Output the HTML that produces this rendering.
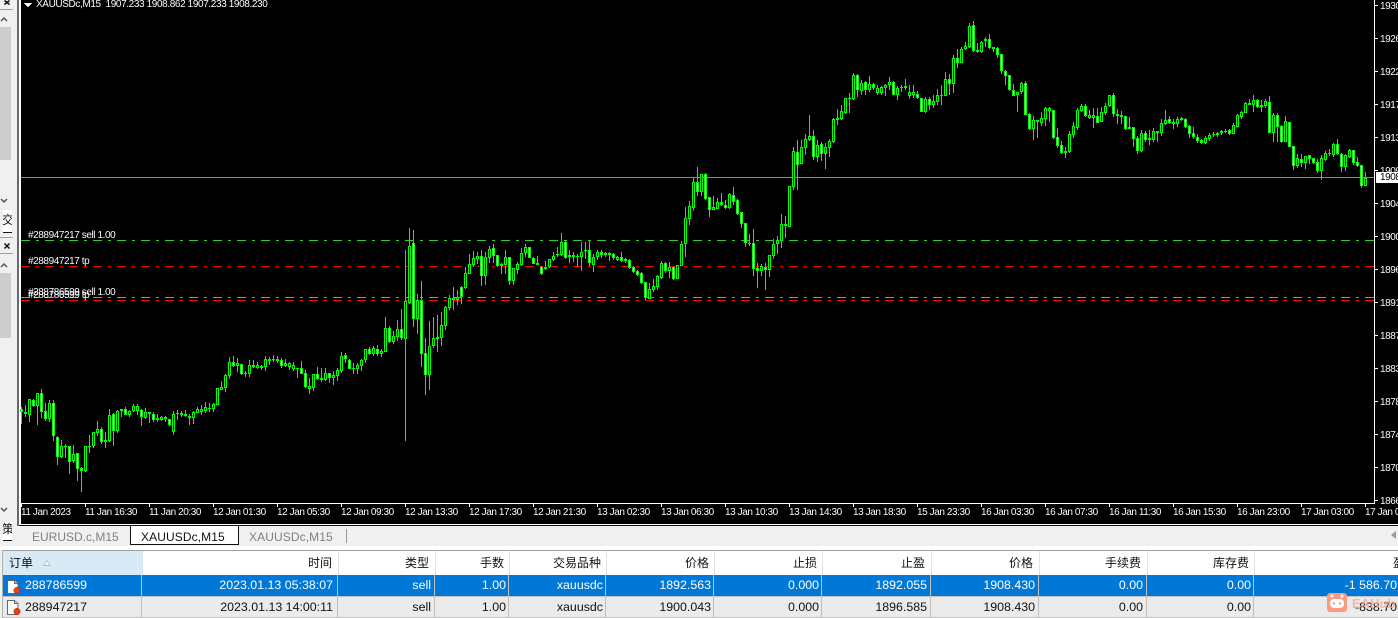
<!DOCTYPE html>
<html><head><meta charset="utf-8"><style>
html,body{margin:0;padding:0;background:#f0f0f0}
#p{position:relative;width:1398px;height:618px;overflow:hidden;font-family:"Liberation Sans","Noto Sans CJK SC",sans-serif;background:#f0f0f0}
#p div,#p span,#p svg{position:absolute}
.c{font-size:10px;letter-spacing:-.42px;color:#f8fbff;white-space:pre;line-height:12px}
.t{font-size:12.4px;white-space:nowrap;line-height:16px}
.h{color:#111;top:555px;font-size:12px}
.a{color:#fff;top:577px}
.b{color:#111;top:599px}
.tab{font-size:12px;color:#808080;top:529px;line-height:16px}
</style></head><body><div id="p">
<div style="left:0;top:0;width:17px;height:526px;background:#f0f0f0"></div>
<div style="left:0;top:27px;width:11px;height:133px;background:#cdcdcd"></div>
<div style="left:0;top:273px;width:11px;height:65px;background:#cdcdcd"></div>
<div style="left:0;top:9px;width:13px;height:1px;background:#a0a0a0"></div>
<div style="left:0;top:253px;width:13px;height:1px;background:#a0a0a0"></div>
<div style="left:0;top:237px;width:13px;height:1px;background:#a0a0a0"></div>
<svg style="left:0;top:0" width="17" height="526" fill="none" stroke="#555" stroke-width="1.5">
<path d="M4.5 .5l5 4M9.5 .5l-5 4M4.5 243.5l5 5M9.5 243.5l-5 5" stroke="#111"/>
<path d="M1 21l3-3 3 3M1 267l3-3 3 3M1 199l3 3 3-3M1 508l3 3 3-3"/>
</svg>
<div style="left:3px;top:210px;width:9px;height:22px;background:#fff;border-bottom:1px solid #111;overflow:hidden"><span style="left:-1px;top:3px;font-size:12px;line-height:14px;color:#111">交</span></div>
<div style="left:17px;top:0;width:2px;height:526px;background:#696969"></div>
<div style="left:19px;top:0;width:2px;height:526px;background:#fff"></div>

<div id="chart" style="left:21px;top:0;width:1377px;height:524px;background:#000"></div>
<div style="left:19px;top:524px;width:1379px;height:1px;background:#fff"></div>
<div style="left:19px;top:525px;width:1379px;height:1px;background:#111"></div>

<svg id="s" style="left:0;top:0" width="1398" height="524" shape-rendering="crispEdges">
<line x1="21" x2="1374" y1="177.5" y2="177.5" stroke="#8a8a8a"/>
<g stroke-dasharray="9 6 3 6" fill="none">
<line x1="21" x2="1374" y1="240.5" y2="240.5" stroke="#32cd32"/>
<line x1="21" x2="1374" y1="297.5" y2="297.5" stroke="#32cd32"/>
<line x1="21" x2="1374" y1="266.5" y2="266.5" stroke="#ff0000"/>
<line x1="21" x2="1374" y1="300.5" y2="300.5" stroke="#ff0000"/>
</g>
<path id="wk" stroke="none" fill="#00ff00"/>
<path id="bd" stroke="none" fill="#00ff00"/>
<path id="wh" stroke="none" fill="#fff"/>
<path id="bk" stroke="none" fill="#000"/>
<rect x="1374" y="0" width="1" height="504" fill="#fff"/>
<rect x="21" y="503" width="1354" height="1" fill="#fff"/>
<path fill="#fff" d="M1375 5h3v1h-3zM1375 38h3v1h-3zM1375 71h3v1h-3zM1375 104h3v1h-3zM1375 137h3v1h-3zM1375 170h3v1h-3zM1375 203h3v1h-3zM1375 236h3v1h-3zM1375 269h3v1h-3zM1375 302h3v1h-3zM1375 335h3v1h-3zM1375 368h3v1h-3zM1375 401h3v1h-3zM1375 434h3v1h-3zM1375 467h3v1h-3zM1375 500h3v1h-3z"/>
<path fill="#fff" d="M21 504h1v3h-1zM85 504h1v3h-1zM149 504h1v3h-1zM213 504h1v3h-1zM277 504h1v3h-1zM341 504h1v3h-1zM405 504h1v3h-1zM469 504h1v3h-1zM533 504h1v3h-1zM597 504h1v3h-1zM661 504h1v3h-1zM725 504h1v3h-1zM789 504h1v3h-1zM853 504h1v3h-1zM917 504h1v3h-1zM981 504h1v3h-1zM1045 504h1v3h-1zM1109 504h1v3h-1zM1173 504h1v3h-1zM1237 504h1v3h-1zM1301 504h1v3h-1zM1365 504h1v3h-1z"/>
<path fill="#fff" d="M24 3h8l-4 4.500z"/>
</svg>

<div class="c" style="left:36px;top:-1px;letter-spacing:-.38px">XAUUSDc,M15  1907.233 1908.862 1907.233 1908.230</div>
<div class="c" style="left:28px;top:230px">#288947217 sell 1.00</div>
<div class="c" style="left:28px;top:256px">#288947217 tp</div>
<div class="c" style="left:28px;top:287px">#288786599 sell 1.00</div>
<div class="c" style="left:28px;top:290px">#288786599 tp</div>

<div class="c" style="left:1380px;top:1px">1930</div>
<div class="c" style="left:1380px;top:34px">1926</div>
<div class="c" style="left:1380px;top:67px">1922</div>
<div class="c" style="left:1380px;top:100px">1917</div>
<div class="c" style="left:1380px;top:133px">1913</div>
<div class="c" style="left:1380px;top:166px">1909</div>
<div class="c" style="left:1380px;top:199px">1904</div>
<div class="c" style="left:1380px;top:232px">1900</div>
<div class="c" style="left:1380px;top:265px">1896</div>
<div class="c" style="left:1380px;top:298px">1891</div>
<div class="c" style="left:1380px;top:331px">1887</div>
<div class="c" style="left:1380px;top:364px">1883</div>
<div class="c" style="left:1380px;top:397px">1878</div>
<div class="c" style="left:1380px;top:430px">1874</div>
<div class="c" style="left:1380px;top:463px">1870</div>
<div class="c" style="left:1380px;top:496px">1866</div>
<div style="left:1376px;top:172px;width:22px;height:11px;background:#fff"></div>
<div class="c" style="left:1380px;top:172px;color:#000">1908</div>

<div class="c" style="left:21px;top:507px">11 Jan 2023</div>
<div class="c" style="left:85px;top:507px">11 Jan 16:30</div>
<div class="c" style="left:149px;top:507px">11 Jan 20:30</div>
<div class="c" style="left:213px;top:507px">12 Jan 01:30</div>
<div class="c" style="left:277px;top:507px">12 Jan 05:30</div>
<div class="c" style="left:341px;top:507px">12 Jan 09:30</div>
<div class="c" style="left:405px;top:507px">12 Jan 13:30</div>
<div class="c" style="left:469px;top:507px">12 Jan 17:30</div>
<div class="c" style="left:533px;top:507px">12 Jan 21:30</div>
<div class="c" style="left:597px;top:507px">13 Jan 02:30</div>
<div class="c" style="left:661px;top:507px">13 Jan 06:30</div>
<div class="c" style="left:725px;top:507px">13 Jan 10:30</div>
<div class="c" style="left:789px;top:507px">13 Jan 14:30</div>
<div class="c" style="left:853px;top:507px">13 Jan 18:30</div>
<div class="c" style="left:917px;top:507px">15 Jan 23:30</div>
<div class="c" style="left:981px;top:507px">16 Jan 03:30</div>
<div class="c" style="left:1045px;top:507px">16 Jan 07:30</div>
<div class="c" style="left:1109px;top:507px">16 Jan 11:30</div>
<div class="c" style="left:1173px;top:507px">16 Jan 15:30</div>
<div class="c" style="left:1237px;top:507px">16 Jan 23:00</div>
<div class="c" style="left:1301px;top:507px">17 Jan 03:00</div>
<div class="c" style="left:1365px;top:507px">17 Jan 0</div>

<div style="left:0;top:526px;width:1398px;height:20px;background:#f0f0f0"></div>
<div style="left:0;top:546px;width:1398px;height:4px;background:#fff"></div>
<div style="left:3px;top:522px;width:9px;height:18px;background:#fff;border-bottom:1px solid #111;overflow:hidden"><span style="left:-1px;top:0;font-size:12px;line-height:14px;color:#111">策</span></div>
<div style="left:130px;top:526px;width:107px;height:18px;background:#fff;border-left:1px solid #111;border-right:1px solid #111;border-bottom:1px solid #111"></div>
<div style="left:346px;top:529px;width:1px;height:14px;background:#999"></div>
<div class="tab" style="left:32px">EURUSD.c,M15</div>
<div class="tab" style="left:141px;color:#111;letter-spacing:.1px">XAUUSDc,M15</div>
<div class="tab" style="left:249px;letter-spacing:.1px">XAUUSDc,M15</div>
<svg style="left:1390px;top:530px" width="8" height="10"><path d="M6 1v8L1 5z" fill="#999"/></svg>

<div style="left:2px;top:550px;width:1396px;height:1px;background:#a0a0a0"></div>
<div style="left:2px;top:551px;width:1396px;height:24px;background:#fff"></div>
<div style="left:3px;top:551px;width:140px;height:24px;background:#d9eaf7"></div>
<div style="left:2px;top:550px;width:1px;height:68px;background:#b0b0b0"></div>
<div style="left:338px;top:551px;width:1px;height:24px;background:#e3e3e3"></div>
<div style="left:435px;top:551px;width:1px;height:24px;background:#e3e3e3"></div>
<div style="left:509px;top:551px;width:1px;height:24px;background:#e3e3e3"></div>
<div style="left:606px;top:551px;width:1px;height:24px;background:#e3e3e3"></div>
<div style="left:714px;top:551px;width:1px;height:24px;background:#e3e3e3"></div>
<div style="left:822px;top:551px;width:1px;height:24px;background:#e3e3e3"></div>
<div style="left:931px;top:551px;width:1px;height:24px;background:#e3e3e3"></div>
<div style="left:1039px;top:551px;width:1px;height:24px;background:#e3e3e3"></div>
<div style="left:1147px;top:551px;width:1px;height:24px;background:#e3e3e3"></div>
<div style="left:1254px;top:551px;width:1px;height:24px;background:#e3e3e3"></div>

<div style="left:3px;top:575px;width:1395px;height:21px;background:#0078d7"></div>
<div style="left:3px;top:596px;width:1395px;height:1px;background:#c0c0c0"></div>
<div style="left:3px;top:597px;width:1395px;height:20px;background:#ebebeb"></div>
<div style="left:3px;top:617px;width:1395px;height:1px;background:#c4c4c4"></div>
<div style="left:141px;top:575px;width:1px;height:43px;background:#c0c0c0"></div>
<div style="left:337px;top:575px;width:1px;height:43px;background:#c0c0c0"></div>
<div style="left:434px;top:575px;width:1px;height:43px;background:#c0c0c0"></div>
<div style="left:508px;top:575px;width:1px;height:43px;background:#c0c0c0"></div>
<div style="left:605px;top:575px;width:1px;height:43px;background:#c0c0c0"></div>
<div style="left:713px;top:575px;width:1px;height:43px;background:#c0c0c0"></div>
<div style="left:821px;top:575px;width:1px;height:43px;background:#c0c0c0"></div>
<div style="left:930px;top:575px;width:1px;height:43px;background:#c0c0c0"></div>
<div style="left:1038px;top:575px;width:1px;height:43px;background:#c0c0c0"></div>
<div style="left:1146px;top:575px;width:1px;height:43px;background:#c0c0c0"></div>
<div style="left:1253px;top:575px;width:1px;height:43px;background:#c0c0c0"></div>

<div class="t h" style="left:9px">订单</div>
<svg style="left:43px;top:559px" width="8" height="8"><path d="M1 6.500L4 1.500L7 6.500z" fill="#fff" stroke="#aaa" stroke-width=".7"/></svg>
<div class="t h" style="right:1066px">时间</div>
<div class="t h" style="right:969px">类型</div>
<div class="t h" style="right:894px">手数</div>
<div class="t h" style="right:797px">交易品种</div>
<div class="t h" style="right:689px">价格</div>
<div class="t h" style="right:581px">止损</div>
<div class="t h" style="right:473px">止盈</div>
<div class="t h" style="right:365px">价格</div>
<div class="t h" style="right:257px">手续费</div>
<div class="t h" style="right:149px">库存费</div>
<div class="t h" style="left:1393px">盈利</div>

<svg style="left:6px;top:578px" width="15" height="18"><path d="M1.500 2.500h7l3.500 3v10h-10.500z" fill="#fff" stroke="#666"/><path d="M8.500 2.500v3h3.500" fill="#ddd" stroke="#666"/><circle cx="11" cy="12.500" r="3.200" fill="#e8400f" stroke="#a02000" stroke-width=".5"/></svg>
<svg style="left:6px;top:599px" width="15" height="18"><path d="M1.500 1.500h7l3.500 3v11h-10.500z" fill="#fff" stroke="#666"/><path d="M8.500 1.500v3h3.500" fill="#ddd" stroke="#666"/><circle cx="11" cy="12.500" r="3.200" fill="#e8400f" stroke="#a02000" stroke-width=".5"/></svg>

<div class="t a" style="left:25px">288786599</div>
<div class="t a" style="right:1065px">2023.01.13 05:38:07</div>
<div class="t a" style="right:967px">sell</div>
<div class="t a" style="right:892px">1.00</div>
<div class="t a" style="right:795px">xauusdc</div>
<div class="t a" style="right:687px">1892.563</div>
<div class="t a" style="right:579px">0.000</div>
<div class="t a" style="right:471px">1892.055</div>
<div class="t a" style="right:363px">1908.430</div>
<div class="t a" style="right:255px">0.00</div>
<div class="t a" style="right:147px">0.00</div>
<div class="t a" style="right:1px">-1 586.70</div>

<div class="t b" style="left:25px">288947217</div>
<div class="t b" style="right:1065px">2023.01.13 14:00:11</div>
<div class="t b" style="right:967px">sell</div>
<div class="t b" style="right:892px">1.00</div>
<div class="t b" style="right:795px">xauusdc</div>
<div class="t b" style="right:687px">1900.043</div>
<div class="t b" style="right:579px">0.000</div>
<div class="t b" style="right:471px">1896.585</div>
<div class="t b" style="right:363px">1908.430</div>
<div class="t b" style="right:255px">0.00</div>
<div class="t b" style="right:147px">0.00</div>
<div class="t b" style="right:1px">-838.70</div>

<svg style="left:1327px;top:593px" width="20" height="20"><rect width="20" height="19" rx="3" fill="#fb9a80"/><circle cx="5" cy="3" r="1.500" fill="#fff"/><circle cx="15" cy="3" r="1.500" fill="#fff"/><rect x="3" y="6" width="14" height="9" rx="4" fill="#fff"/><circle cx="7" cy="10.500" r="1.200" fill="#fb9a80"/><circle cx="13" cy="10.500" r="1.200" fill="#fb9a80"/></svg>
<div style="left:1352px;top:596px;font-size:13px;font-weight:bold;line-height:16px;color:#f5a58c;opacity:.75">EAHub</div>
</div>
<script>
var segs=[
[0,380,"82,86,97,132,1|75,97,102,110,0|57,58,104,126,0|58,60,78,80,1|40,40,77,135,0|27,40,95,113,1|68,94,116,122,1|60,70,116,126,0|60,70,167,183,1|168,172,230,255,1|180,198,232,235,0|192,198,200,234,0|198,199,245,282,1|195,222,243,250,0|220,220,266,303,1|262,265,272,336,1|197,198,274,275,0|165,198,200,218,0|155,156,197,203,0|123,148,158,168,0|142,148,186,192,1|156,180,185,204,0|87,106,184,186,0|100,102,152,198,1|90,94,152,159,0|88,88,92,111,0|82,88,104,105,1|90,92,105,111,0|72,79,93,97,0|72,78,92,105,0|88,90,112,138,1|84,97,113,118,0|97,97,101,129,0|97,103,119,125,1|102,115,119,125,0|108,112,120,123,0|108,112,118,126,0|116,118,136,139,1|94,103,155,165,0|91,99,103,120,0|92,99,105,110,0|91,103,109,112,1|103,108,113,135,0|92,97,113,132,0|82,88,98,100,0|75,87,95,105,0|66,82,92,100,0|70,84,87,95,0|70,73,87,96,0|24,25,74,75,0"],
[50,220,"484,501,509,510,0|462,466,503,516,0|411,427,467,476,0|408,427,438,441,1|414,430,437,455,0|431,433,461,464,1|452,458,460,471,0|420,436,461,471,0|420,435,441,444,1|427,436,443,447,0|435,437,443,449,0|408,417,441,453,0|410,417,422,434,0|405,418,420,427,0|408,418,424,428,0|414,421,437,443,1|417,430,438,442,0|427,430,441,449,0|426,436,447,452,0|445,445,447,474,0|423,445,461,463,1|449,460,500,504,1|473,499,506,522,0|462,463,505,513,0|441,463,477,481,1|444,475,480,487,0|444,460,480,484,0|460,460,473,488,1|453,466,473,495,0|444,451,467,483,0|396,409,452,459,0|400,405,418,430,1|417,421,446,448,1|430,443,446,462,0|430,436,446,462,0|416,421,437,453,0|387,388,419,429,0|381,388,401,405,1|378,385,401,407,0|376,386,401,408,1|388,394,401,411,0|291,325,395,396,0|319,325,366,370,1|334,349,365,372,0|301,328,351,364,0|267,328,353,360,1|90,244,356,662,0|25,77,250,252,0|30,70,298,320,1|222,241,296,342,0|183,241,401,441,1|354,400,465,525,1|303,379,464,510,0|292,355,377,384,0|285,352,356,396,0|277,316,353,378,0|259,260,317,330,0|226,235,263,270,0|202,235,239,270,0|210,232,240,255,0"],
[110,160,"378,382,412,432,1|322,340,384,388,0|282,313,341,341,0|273,295,316,322,0|275,287,297,313,0|270,287,347,378,1|275,291,347,376,0|257,268,293,310,0|252,265,287,310,1|284,286,318,322,1|308,313,317,342,0|270,292,314,342,0|292,292,362,375,1|323,325,362,375,0|305,313,330,342,0|265,280,314,317,0|252,262,278,291,0|260,262,293,295,1|292,293,312,312,1|289,310,314,315,0|318,321,341,345,1|304,320,326,329,0|297,298,320,325,0|277,287,300,303,0|262,283,286,290,0|220,247,285,289,0|241,247,293,298,1|270,286,291,309,0|276,286,291,306,0|282,287,289,320,0|246,275,291,333,0|247,270,272,297,0|241,271,309,318,1|283,292,315,335,0|270,277,291,300,0|270,276,285,295,1|275,280,285,292,0|277,280,284,302,0|280,283,295,299,1|287,291,300,304,0|277,292,302,307,1|295,297,303,310,1|298,301,323,327,1|317,321,335,338,1|329,334,345,349,1|335,340,368,373,1|365,367,413,420,1|370,388,416,418,0|358,379,391,395,0|345,348,381,390,0|303,310,353,356,0|305,308,333,338,1|306,322,333,355,0|320,322,357,360,1|314,316,356,358,0|243,252,317,318,0|142,175,251,291,0|124,139,176,195,0|52,67,143,152,0|22,67,95,109,1|42,43,95,108,0|38,43,116,120,1|111,112,150,170,1|108,142,149,151,0|113,127,146,148,0|98,127,135,139,1|120,134,143,147,1|98,102,143,147,0|82,106,126,135,1|118,121,162,165,1|156,157,191,204,1|190,190,248,262,1|222,249,251,257,0|208,250,326,348,1|310,325,332,384,1|313,319,332,348,0|309,321,329,390,1|285,286,329,351,0|237,253,288,298,0|227,240,251,282,0|163,193,243,264,0|167,193,199,235,0|78,79,200,202,0"],
[193,10,"411,424,530,540,0|390,427,465,540,1|390,412,461,462,0|372,388,413,434,0|316,379,389,392,0|360,379,441,449,1|390,406,441,456,0|397,403,431,453,1|400,412,431,477,0|388,394,413,441,0|325,328,395,398,0|297,325,329,345,0|285,304,327,329,0|263,265,308,311,0|250,265,268,309,0|190,195,268,269,0|192,196,241,261,1|210,220,242,255,0|212,217,239,255,1|197,223,239,245,0|220,223,235,240,1|225,235,248,255,0|229,232,248,254,0|222,224,233,258,0|202,217,225,240,0|214,217,254,255,1|228,235,254,270,0|226,232,235,245,0|207,229,235,240,0|226,245,257,267,0|225,245,254,265,0|243,253,265,267,1|264,265,305,306,1|262,268,305,309,0|260,268,284,300,1|255,274,284,295,0|237,256,275,285,0|225,256,258,285,0|187,208,257,258,0|193,208,223,255,1|136,145,223,250,0|117,145,158,174,1|112,118,158,160,0|97,109,118,120,0|40,49,110,114,0|33,46,123,125,1|99,121,126,128,0|93,95,125,128,0|82,88,94,110,0|72,88,113,117,1|111,112,116,126,0|112,115,135,144,1|132,133,182,192,1|180,182,197,225,1|194,196,241,243,1|222,241,257,259,1|245,247,254,305,0|215,220,245,251,0|213,220,314,315,1|310,313,356,360,1|318,331,356,389,0|330,331,335,384,0|306,325,339,347,0|291,295,326,348,0|291,295,302,335,0|300,301,384,388,1|354,382,407,414,1|393,406,429,432,1|411,424,428,444,0|362,373,426,429,0|337,349,375,383,0|295,301,353,360,0"],
[265,80,"72,78,93,97,0|73,78,108,112,1|90,106,114,117,0|85,106,114,144,0|85,108,128,130,1|82,97,126,126,0|70,78,100,105,0|45,46,78,80,0|40,46,102,110,1|87,103,107,133,0|94,106,110,133,0|108,109,147,150,1|112,142,146,147,0|140,141,176,200,1|168,175,213,222,1|150,160,213,216,0|152,160,179,185,1|150,175,179,195,0|145,153,179,185,0|152,154,158,187,0|116,130,158,168,0|91,121,132,135,0|108,118,128,132,1|118,126,131,147,0|112,118,132,140,0|112,115,120,123,0|115,118,140,143,1|136,139,161,175,1|140,160,172,176,1|162,172,183,190,1|177,180,189,192,1|168,175,189,192,0|160,165,177,183,0|155,162,166,170,0|156,160,165,170,0|150,153,159,165,0|147,153,155,160,0|147,151,161,165,1|130,136,161,163,0|103,106,140,142,0|92,97,110,116,0|65,70,98,100,0|58,70,74,76,0|45,61,76,95,0|58,61,80,85,1|60,76,80,96,0|57,64,78,85,0|48,65,158,160,1|98,106,158,187,0|98,106,140,186,1|135,139,186,190,1|108,124,186,187,0|126,127,200,201,1|198,199,257,270,1|223,235,258,265,0|223,238,248,262,1|228,229,248,267,0|226,226,236,253,1|233,235,248,253,1|238,247,273,280,1|225,235,273,300,0|212,220,240,243,0|207,219,222,228,0|190,191,224,231,0|178,192,221,225,1|220,221,260,276,1|222,226,260,273,0|208,209,231,233,0|210,211,249,256,1|232,247,257,262,1|256,256,317,323,1|277,293,317,318,0"]
];
var W="",B="",H="",K="";
segs.forEach(function(s){
  s[2].split("|").forEach(function(c,i){
    var v=c.split(",").map(Number),k=s[0]+i,x=21+4*k,y=s[1];
    var h=Math.round(y+v[0]/3),t=Math.round(y+v[1]/3),b=Math.round(y+v[2]/3),l=Math.round(y+v[3]/3);
    if(b<=t)b=t+1;
    W+="M"+x+" "+h+"h1V"+l+"h-1z";
    B+="M"+(x-1)+" "+t+"h3V"+b+"h-3z";
    if(b-t>2){var p="M"+x+" "+(t+1)+"h1V"+(b-1)+"h-1z";if(v[4])H+=p;else K+=p;}
  });
});
document.getElementById("wk").setAttribute("d",W);
document.getElementById("bd").setAttribute("d",B);
document.getElementById("wh").setAttribute("d",H);
document.getElementById("bk").setAttribute("d",K);
</script>
</body></html>
